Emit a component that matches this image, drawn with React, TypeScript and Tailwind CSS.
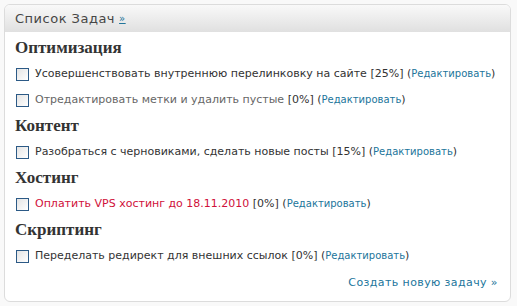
import React from "react";

const sans = { fontFamily: '"DejaVu Sans", Verdana, sans-serif' };
const serif = { fontFamily: '"Liberation Serif", Georgia, serif' };

function Box() {
  return (
    <span className="inline-block w-[13px] h-[13px] border border-[#2c5a86] bg-gradient-to-br from-[#e4e4e4] to-white shrink-0" />
  );
}

function Task({ text, pct, tone }: { text: string; pct: string; tone?: "gray" | "red" }) {
  const c = tone === "gray" ? "text-[#666]" : tone === "red" ? "text-[#d0103a]" : "text-[#333]";
  return (
    <div className="flex items-center h-[26px] pl-[11px]">
      <Box />
      <span className="ml-[6px] text-[11px] whitespace-nowrap text-[#333]">
        <span className={c}>{text}</span> {pct} (
        <span className="text-[10px] text-[#21759b]">Редактировать</span>)
      </span>
    </div>
  );
}

function Heading({ children }: { children: React.ReactNode }) {
  return (
    <div className="h-[26px] flex items-center pl-[10px] text-[17px] font-bold text-[#333]" style={serif}>
      {children}
    </div>
  );
}

export default function App() {
  return (
    <div className="w-[517px] h-[306px] bg-[#f9f9f9] p-[4px] pr-[6px]" style={sans}>
      <div className="h-[298px] border border-[#dcdcdc] rounded-[6px] bg-white overflow-hidden flex flex-col">
        <div className="h-[27px] bg-gradient-to-b from-[#f9f9f9] to-[#e0e0e0] flex items-center pl-[10px] text-[13px] tracking-[0.5px] text-[#464646]">
          Список Задач
          <span className="ml-[4px] text-[10px] text-[#21759b] underline">»</span>
        </div>
        <div className="pt-[3px] flex flex-col">
          <Heading>Оптимизация</Heading>
          <Task text="Усовершенствовать внутреннюю перелинковку на сайте" pct="[25%]" />
          <Task text="Отредактировать метки и удалить пустые" pct="[0%]" tone="gray" />
          <Heading>Контент</Heading>
          <Task text="Разобраться с черновиками, сделать новые посты" pct="[15%]" />
          <Heading>Хостинг</Heading>
          <Task text="Оплатить VPS хостинг до 18.11.2010" pct="[0%]" tone="red" />
          <Heading>Скриптинг</Heading>
          <Task text="Переделать редирект для внешних ссылок" pct="[0%]" />
          <div className="flex justify-end pr-[12px] pt-[6px] text-[11px] tracking-[0.4px] text-[#21759b]">
            Создать новую задачу »
          </div>
        </div>
      </div>
    </div>
  );
}
